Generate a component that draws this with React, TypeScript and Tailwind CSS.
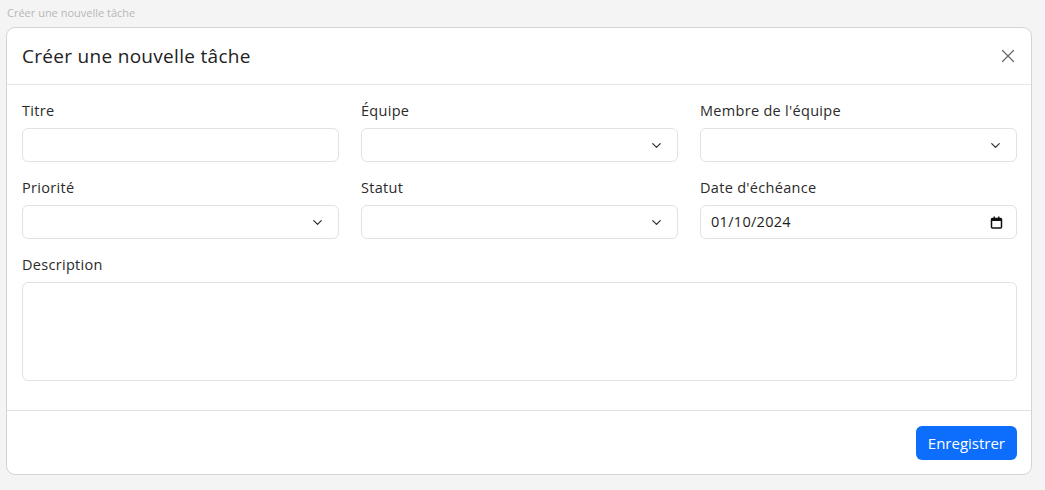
import { ChevronDown, X } from "lucide-react";

const font = { fontFamily: '"Open Sans", "Liberation Sans", sans-serif' };

function Label({ children }: { children: React.ReactNode }) {
  return (
    <label className="mb-[7px] block text-[14.5px] leading-[20px] tracking-[0.3px] text-[#2b2b2b]">{children}</label>
  );
}

function SelectBox({ label }: { label: string }) {
  return (
    <div>
      <Label>{label}</Label>
      <button
        type="button"
        className="flex h-[34px] w-full items-center justify-end rounded-[6px] border border-[#e2e2e2] bg-white pr-[13px]"
      >
        <ChevronDown size={15} strokeWidth={2} className="text-[#333]" />
      </button>
    </div>
  );
}

function TextBox({ label }: { label: string }) {
  return (
    <div>
      <Label>{label}</Label>
      <input
        type="text"
        className="block h-[34px] w-full rounded-[6px] border border-[#e2e2e2] bg-white px-3 text-[14px] outline-none"
      />
    </div>
  );
}

function DateBox({ label, value }: { label: string; value: string }) {
  return (
    <div>
      <Label>{label}</Label>
      <div className="flex h-[34px] w-full items-center justify-between rounded-[6px] border border-[#e2e2e2] bg-white pl-[10px] pr-[13px]">
        <span className="text-[14.5px] tracking-[0.3px] text-[#1e1e1e]">{value}</span>
        <svg width="13" height="13" viewBox="0 0 13 13" aria-hidden>
          <rect x="1.5" y="2.5" width="10" height="9.5" rx="1" fill="none" stroke="#111" strokeWidth="1.5" />
          <rect x="1.5" y="2.5" width="10" height="2.5" fill="#111" />
          <rect x="3.5" y="0.5" width="1.4" height="2.5" fill="#111" />
          <rect x="8.1" y="0.5" width="1.4" height="2.5" fill="#111" />
        </svg>
      </div>
    </div>
  );
}

export default function App() {
  return (
    <div className="min-h-[490px] bg-[#f4f4f4] pl-[6px] pr-[13px] pt-[5px]" style={font}>
      <p className="pl-[1px] text-[11px] leading-[16px] text-[#b8b8b8]">Créer une nouvelle tâche</p>
      <div className="mt-[6px] rounded-[9px] border border-[#d4d4d4] bg-white">
        <div className="flex h-[57px] items-center justify-between border-b border-[#e6e6e6] pl-[15px] pr-[12px]">
          <h2 className="text-[19px] tracking-[0.3px] text-[#222]">Créer une nouvelle tâche</h2>
          <button type="button" className="text-[#666]">
            <X size={22} strokeWidth={1.3} />
          </button>
        </div>
        <div className="pb-[29px] pl-[15px] pr-[14px] pt-[16px]">
          <div className="grid grid-cols-3 gap-x-[22px] gap-y-[16px]">
            <TextBox label="Titre" />
            <SelectBox label="Équipe" />
            <SelectBox label="Membre de l'équipe" />
            <SelectBox label="Priorité" />
            <SelectBox label="Statut" />
            <DateBox label="Date d'échéance" value="01/10/2024" />
          </div>
          <div className="mt-[16px]">
            <Label>Description</Label>
            <textarea className="block h-[99px] w-full resize-none rounded-[6px] border border-[#e2e2e2] bg-white px-3 py-2 text-[14px] outline-none" />
          </div>
        </div>
        <div className="flex justify-end border-t border-[#e2e2e2] pb-[14px] pr-[14px] pt-[15px]">
          <button type="button" className="h-[34px] rounded-[6px] bg-[#0d6efd] px-[12px] text-[15px] text-white">
            Enregistrer
          </button>
        </div>
      </div>
    </div>
  );
}
